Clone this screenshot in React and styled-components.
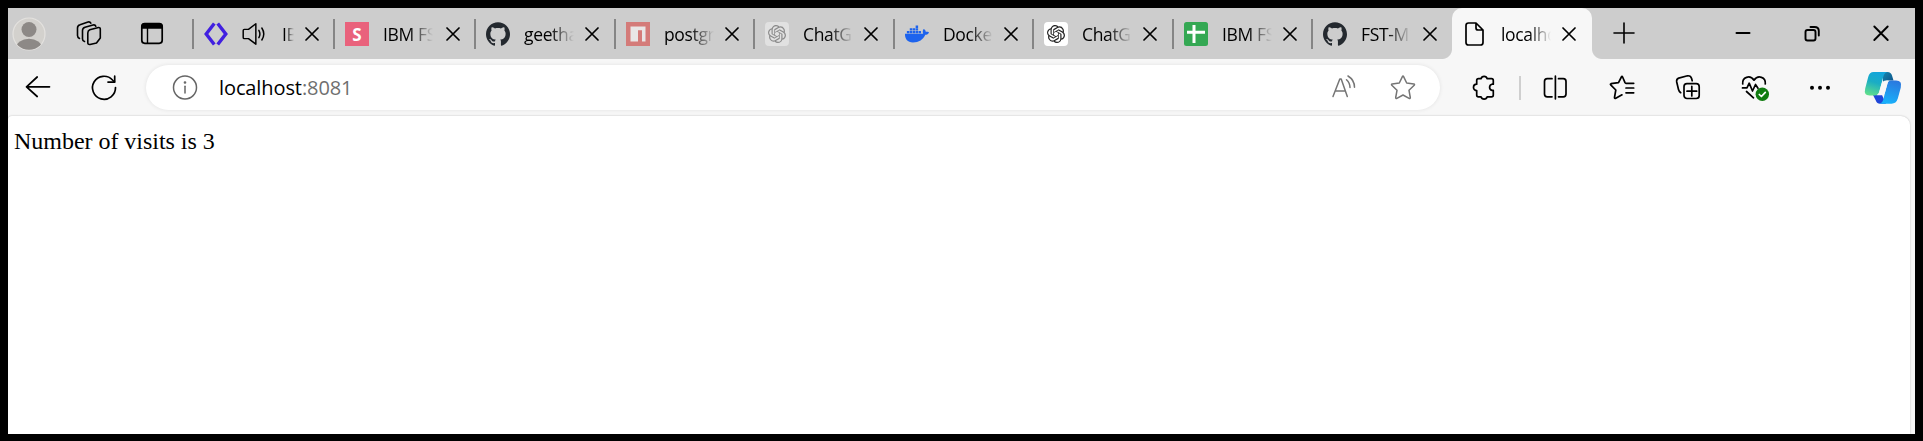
import React from 'react';
import styled, { createGlobalStyle, css } from 'styled-components';
import { SiGithub, SiOpenai } from 'react-icons/si';
import { FaDocker } from 'react-icons/fa';

const GlobalStyle = createGlobalStyle`
  *, *::before, *::after { box-sizing: border-box; }
  html, body { margin: 0; padding: 0; background: #000; }
`;

const Screen = styled.div`
  width: 1923px;
  height: 441px;
  padding: 8px 8px 7px;
  background: #000;
  overflow: hidden;
`;

const BrowserWindow = styled.div`
  display: flex;
  flex-direction: column;
  height: 426px;
  background: #f7f7f7;
  font-family: 'Open Sans', 'Noto Sans', sans-serif;
`;

const TabStrip = styled.div`
  display: flex;
  height: 51px;
  background: #cdcdcd;
`;

const Slot = styled.div`
  flex: none;
  display: flex;
  align-items: center;
  justify-content: center;
  width: ${(p) => p.$w}px;
  margin-left: ${(p) => p.$ml || 0}px;
  height: 100%;
`;

const Glyph = styled.svg`
  flex: none;
  display: block;
  width: 40px;
  height: 37px;
  fill: none;
  stroke: ${(p) => p.$color || '#000'};
  stroke-width: ${(p) => p.$stroke || 1.7};
  stroke-linecap: round;
  stroke-linejoin: round;
`;

const Icon = ({ children, ...rest }) => (
  <Glyph viewBox="-20 -18 40 37" {...rest}>{children}</Glyph>
);

const Tab = styled.div`
  flex: none;
  position: relative;
  display: flex;
  align-items: center;
  width: ${(p) => p.$w}px;
  height: 51px;
  padding-left: 10px;
  ${(p) => p.$active
    ? css`
        background: #f7f7f7;
        border-radius: 10px 10px 0 0;
        &::before, &::after {
          content: '';
          position: absolute;
          bottom: 0;
          width: 10px;
          height: 10px;
        }
        &::before { left: -10px; background: radial-gradient(circle at 0 0, transparent 9.5px, #f7f7f7 10.5px); }
        &::after { right: -10px; background: radial-gradient(circle at 100% 0, transparent 9.5px, #f7f7f7 10.5px); }
      `
    : css`
        &::before {
          content: '';
          width: 2px;
          height: 30px;
          margin: 1px 0 0 -10px;
          background: #858585;
        }
      `}
`;

const Favicon = styled.div`
  flex: none;
  display: flex;
  align-items: center;
  justify-content: center;
  width: 24px;
  height: 24px;
  margin-left: ${(p) => p.$ml ?? 10}px;
  margin-top: 1px;
  border-radius: ${(p) => p.$r || 0}px;
  background: ${(p) => p.$bg || 'transparent'};
  color: ${(p) => p.$fg || '#24292f'};
  font-weight: 700;
  font-size: 17px;
  line-height: 1;
  svg { display: block; }
`;

const TabTitle = styled.div`
  flex: none;
  width: ${(p) => p.$w || 50}px;
  margin-left: ${(p) => p.$ml ?? 14}px;
  overflow: hidden;
  white-space: nowrap;
  font-size: 17.5px;
  line-height: 28px;
  letter-spacing: -0.35px;
  color: #000;
  mask-image: linear-gradient(to right, #000 ${(p) => p.$fade ?? 28}px, transparent 100%);
`;

const TabClose = styled.div`
  position: absolute;
  right: ${(p) => p.$right ?? 14}px;
  display: flex;
  margin-top: 1px;
`;

const Toolbar = styled.div`
  display: flex;
  flex: none;
  align-items: center;
  height: 57px;
`;

const AddressBar = styled.div`
  flex: none;
  display: flex;
  align-items: center;
  width: 1294px;
  height: 45px;
  margin: 0 10px 0 6px;
  padding: 0 27px 0 19px;
  border-radius: 23px;
  background: #fff;
  box-shadow: 0 0 4px rgba(0, 0, 0, 0.09);
`;

const Url = styled.div`
  flex: 1;
  margin-left: 14px;
  font-size: 20px;
  line-height: 30px;
  letter-spacing: -0.1px;
  color: #000;
  span { color: #6f6f6f; }
`;

const Divider = styled.div`
  flex: none;
  width: 2px;
  height: 24px;
  margin-left: 3px;
  background: #cfcfcf;
`;

const Page = styled.main`
  flex: 1;
  margin-right: 5px;
  padding: 11px 6px;
  background: #fff;
  border-radius: 4px 9px 0 0;
  box-shadow: 0 0 2px rgba(0, 0, 0, 0.25);
  clip-path: inset(-3px -3px 0 0);
  font-family: 'Liberation Serif', serif;
  font-size: 24px;
  line-height: 28px;
  letter-spacing: -0.03px;
  color: #000;
`;

const CloseIcon = () => (
  <svg width="14" height="14" viewBox="0 0 14 14" fill="none" stroke="#000" strokeWidth="1.7" strokeLinecap="round">
    <path d="M1 1l12 12M13 1L1 13" />
  </svg>
);

const DiamondIcon = () => (
  <svg width="24" height="24" viewBox="0 0 24 24" fill="none" stroke="#4120e0" strokeWidth="3.4">
    <path d="M10.3 1.5L2.2 12l8.1 10.5M13.7 1.5L21.8 12l-8.1 10.5" />
  </svg>
);

const SpeakerIcon = () => (
  <svg width="26" height="24" viewBox="0 0 26 24" fill="none" stroke="#000" strokeWidth="1.6" strokeLinecap="round" strokeLinejoin="round">
    <path d="M2.5 7H7L15 .9V23L7 17H2.500Q1.300 17 1.300 15.800V8.200Q1.300 7 2.500 7Z" />
    <path d="M18.300 8q2.200 4 0 8M21.500 5.500q4.200 6.500 0 13" />
  </svg>
);

const NpmIcon = () => (
  <svg width="24" height="24" viewBox="0 0 24 24">
    <path fill="#d47b79" d="M0 0h24v24H0z" />
    <path fill="#e9e6e6" d="M4.500 4.500h15v15h-3.500V8.300h-4v11.200H4.500z" />
  </svg>
);

const SheetIcon = () => (
  <svg width="24" height="24" viewBox="0 0 24 24">
    <rect width="24" height="24" rx="2.500" fill="#34a853" />
    <path stroke="#fff" strokeWidth="3" d="M3 10.300h18M10 3v18" />
  </svg>
);

const FileIcon = () => (
  <svg width="20" height="24" viewBox="0 0 20 24" fill="none" stroke="#000" strokeWidth="1.7" strokeLinejoin="round">
    <path d="M3.500 1H11L18 8v12.500Q18 23 15.500 23h-12Q1 23 1 20.500v-17Q1 1 3.500 1zM11 1v5Q11 8 13 8h5" />
  </svg>
);

const tabs = [
  { w: 141, title: 'IBM', icon: <Favicon><DiamondIcon /></Favicon>, audio: true },
  { w: 141, title: 'IBM FST', icon: <Favicon $bg="#e9627c" $fg="#fff">S</Favicon> },
  { w: 140, title: 'geetha', icon: <Favicon><SiGithub size={24} /></Favicon>, close: 15 },
  { w: 139, title: 'postgres', icon: <Favicon><NpmIcon /></Favicon> },
  { w: 140, title: 'ChatGPT', icon: <Favicon $bg="#e1e1e1" $fg="#8b8b8b" $r={4}><SiOpenai size={18} /></Favicon>, close: 15 },
  { w: 139, title: 'Docker', icon: <Favicon $fg="#1d63ed"><FaDocker size={24} /></Favicon> },
  { w: 140, title: 'ChatGPT', icon: <Favicon $bg="#fff" $fg="#222" $r={4}><SiOpenai size={18} /></Favicon>, close: 15 },
  { w: 139, title: 'IBM FST', icon: <Favicon><SheetIcon /></Favicon> },
  { w: 141, title: 'FST-M1', icon: <Favicon><SiGithub size={24} /></Favicon>, close: 15 },
];

const Avatar = () => (
  <Icon stroke="none">
    <defs>
      <clipPath id="avatar-clip"><circle cx="0" cy="1" r="15.800" /></clipPath>
    </defs>
    <circle cx="0" cy="1" r="16" fill="#d3d1cd" stroke="#e4e2df" strokeWidth="1.200" />
    <g clipPath="url(#avatar-clip)" fill="#8d8986" stroke="none">
      <circle cx="0" cy="-3.500" r="7.500" />
      <ellipse cx="0" cy="15" rx="13" ry="9.300" />
    </g>
  </Icon>
);

const CopilotIcon = () => (
  <Icon>
    <defs>
      <linearGradient id="cp-left" x1="0.600" y1="0" x2="0.300" y2="1">
        <stop offset="0" stopColor="#12a5dc" />
        <stop offset="0.450" stopColor="#1badc4" />
        <stop offset="1" stopColor="#5ede8c" />
      </linearGradient>
      <linearGradient id="cp-right" x1="0.700" y1="0" x2="0.400" y2="1">
        <stop offset="0" stopColor="#2b78de" />
        <stop offset="1" stopColor="#18b2fb" />
      </linearGradient>
      <linearGradient id="cp-fold" x1="0" y1="0" x2="1" y2="1">
        <stop offset="0" stopColor="#1686ae" />
        <stop offset="1" stopColor="#0d4f86" />
      </linearGradient>
    </defs>
    <g stroke="none">
      <path fill="url(#cp-fold)" d="M0-15H4.500Q8-15 9-11.500L10.500-6.500H5Q1-6.500 0-3Z" />
      <path fill="#1f45d8" d="M-10 8H-1L3 16.700H-3Q-6 16.700-7.200 13.500Z" />
      <path fill="url(#cp-left)" d="M-9.500-15H4.500Q1.500-14.500.5-11L-3.800 5Q-4.800 8.500-8.500 8.500H-13.500Q-19.500 8.500-17.800 1.500L-14.800-10Q-13.500-15-9.500-15Z" />
      <path fill="url(#cp-right)" d="M6-6.500H13Q19.500-6.500 17.800.5L14.800 11.500Q13.200 16.700 8.500 16.700H-4Q-.8 16.500.3 12.500L4.200-3Q5-6.500 8-6.500Z" />
      <path fill="#f7f7f7" d="M3-6.500H5.500L1.800 6Q1 8.300-1.500 8.300H-6.500Q-4.500 7.500-3.800 5L-1.500-3Q-.5-6.500 3-6.500Z" />
    </g>
  </Icon>
);

export default function App() {
  return (
    <Screen>
      <GlobalStyle />
      <BrowserWindow>
        <TabStrip>
          <Slot $w={42}><Avatar /></Slot>
          <Slot $w={60} $ml={9}>
            <Icon $stroke={1.6}>
              <path d="M.8-3.300L9.500-5.500Q11.300-5.700 11.300-4V5L7.500 10 1 11.500Q-1.200 11.800-1.200 9.800V0Q-1.200-2.500.8-3.300Z" />
              <path d="M-4.500 8.500Q-6.500 8-6.500 6V-2.500Q-6.500-5-4-5.800L4-8Q6.200-8.500 6.800-6.800" />
              <path d="M-9.500 5.500Q-11.500 4.500-11.500 2.500V-5Q-11.500-7.500-9-8.200L-1-11Q1-11.500 1.800-9.800" />
            </Icon>
          </Slot>
          <Slot $w={60} $ml={3}>
            <Icon>
              <rect x="-10.200" y="-9.300" width="20.400" height="19.600" rx="3" />
              <path fill="#000" d="M-10-5V-6.500Q-10-9-7.500-9H7.500Q10-9 10-6.500V-5Z" />
              <path d="M-4.500-5V10" strokeWidth="1.400" />
            </Icon>
          </Slot>
          <Slot $w={10} />
          {tabs.map((t, i) => (
            <Tab key={i} $w={t.w}>
              {t.icon}
              {t.audio && <Favicon $ml={14}><SpeakerIcon /></Favicon>}
              <TabTitle $w={t.audio ? 12 : 50} $ml={t.audio ? 16 : 14} $fade={t.audio ? 3 : 26}>{t.title}</TabTitle>
              <TabClose $right={t.close}><CloseIcon /></TabClose>
            </Tab>
          ))}
          <Tab $active $w={140}>
            <Favicon $ml={1}><FileIcon /></Favicon>
            <TabTitle>localhost</TabTitle>
            <TabClose $right={16}><CloseIcon /></TabClose>
          </Tab>
          <Slot $w={64}>
            <Icon $stroke={1.6}><path d="M-10 0H10M0-10V10" /></Icon>
          </Slot>
          <Slot $w={68} $ml={53}>
            <Icon $stroke={2}><path d="M-6.500 0H6.500" /></Icon>
          </Slot>
          <Slot $w={68} $ml={1}>
            <Icon $stroke={1.900}>
              <rect x="-6.500" y="-3" width="10" height="10.500" rx="2" />
              <path d="M-1.500-6H2.500Q6.800-6 6.800-2V2.500" />
            </Icon>
          </Slot>
          <Slot $w={68} $ml={1}>
            <Icon $stroke={1.900}><path d="M-6.700-6.500L6.700 7M6.700-6.500L-6.700 7" /></Icon>
          </Slot>
        </TabStrip>
        <Toolbar>
          <Slot $w={60}>
            <Icon><path d="M11.500-.2H-11.500M-.8-10L-11.500-.2-.8 9.500" /></Icon>
          </Slot>
          <Slot $w={72}>
            <Icon>
              <path d="M11.500.5A11.500 11.500 0 1 1 8.500-7L10.500-5" />
              <path d="M10.700-10.800V-4.900H4" />
            </Icon>
          </Slot>
          <AddressBar>
            <Icon $color="#666" $stroke={1.500}>
              <circle cx="0" cy=".5" r="11.500" />
              <path d="M0-.8V6" />
              <circle cx="0" cy="-4.500" r=".6" fill="#666" />
            </Icon>
            <Url>localhost<span>:8081</span></Url>
            <Icon $color="#757575" $stroke={1.500}>
              <path d="M-10 9.500L-3.200-8H-1.800L4.300 9.500M-7.700 4H2.200M3.500-7.300Q7-4 7 .5M5-11Q11.500-7 11.500.3" />
            </Icon>
            <Slot $w={20} $ml={30}>
              <Icon $color="#757575" $stroke={1.500}>
                <path d="M-.6-10.300Q0-11.500.6-10.300L3.700-4 10.800-2.900Q12-2.600 11.200-1.700L6 3.300 7.300 10.500Q7.300 11.900 6.100 11.300L0 8-6.100 11.300Q-7.300 11.900-7.300 10.500L-6 3.300-11.200-1.700Q-12-2.600-10.800-2.900L-3.700-4Z" />
              </Icon>
            </Slot>
          </AddressBar>
          <Slot $w={66}>
            <Icon>
              <path d="M-4.500-8.300H-2A3.200 3.200 0 0 1 4.200-8.300H8.500Q10.300-8.300 10.300-6.500V-2.800H9A3.200 3.200 0 0 0 9 3.400H10.300V8Q10.300 9.800 8.500 9.800H4.200A3.200 3.200 0 0 1-2 9.800H-4.500Q-6.300 9.800-6.300 8V3.600A3.200 3.200 0 0 1-6.300-2.800V-6.500Q-6.300-8.300-4.500-8.300Z" />
            </Icon>
          </Slot>
          <Divider />
          <Slot $w={68}>
            <Icon>
              <path d="M-3-8.300H-7.700Q-10.500-8.300-10.500-5.500V7Q-10.500 9.800-7.700 9.800H-3M3.500-8.300H8.300Q11-8.300 11-5.500V7Q11 9.800 8.300 9.800H3.500M.4-10.800V11.800" />
            </Icon>
          </Slot>
          <Slot $w={66}>
            <Icon>
              <path d="M11.700-3.700H4Q3.300-3.700 3-4.300L.6-10Q0-11.300-.6-10L-3.500-4.300-11-3.300Q-12-3-11.300-2.200L-6.200 3-7.500 10.500Q-7.300 11.800-6.200 11.300L0 7.800M4 1H11.700M4 5.800H11.700" />
            </Icon>
          </Slot>
          <Slot $w={66}>
            <Icon>
              <rect x="-4" y="-3.300" width="15.200" height="14.800" rx="3" />
              <path d="M-1 4.200H8.700M3.800-.7V9M-7.300 5.700Q-9 4.500-9.500 2.500L-11.300-5Q-11.800-8-9.300-8.900L-.5-11.200Q2.800-11.500 3.600-8.500L4.200-6.200" />
            </Icon>
          </Slot>
          <Slot $w={66}>
            <Icon>
              <path d="M-11.300-3C-12-10-4-12.500 0-6.800 4-12.500 12-10 11.300-3M-11.500.9H-7L-4.800-3.800-1.500 4 1.500-2.500 4 1.200M-7.500 4.500L-.5 10.800" />
              <circle cx="8.300" cy="7.300" r="6.700" fill="#107c10" stroke="none" />
              <path stroke="#fff" d="M5.300 7.500L7.400 9.500 11.300 5.300" />
            </Icon>
          </Slot>
          <Slot $w={66}>
            <Icon>
              <g fill="#000" stroke="none">
                <circle cx="-8" cy=".8" r="2" /><circle cx="0" cy=".8" r="2" /><circle cx="8" cy=".8" r="2" />
              </g>
            </Icon>
          </Slot>
          <Slot $w={60}><CopilotIcon /></Slot>
        </Toolbar>
        <Page>Number of visits is 3</Page>
      </BrowserWindow>
    </Screen>
  );
}
